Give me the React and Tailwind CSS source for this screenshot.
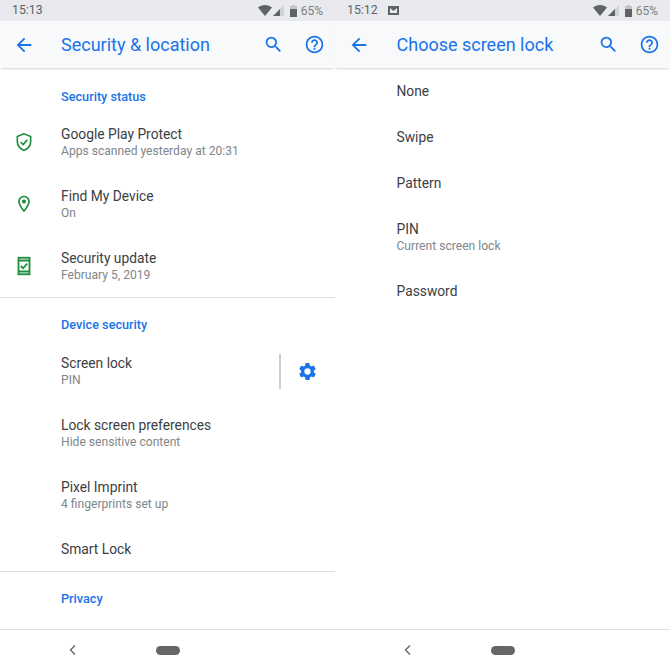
const BLUE = "#1a73e8";
const GREEN = "#1e8e3e";

function ArrowBack() {
  return (
    <svg width="22" height="22" viewBox="0 0 24 24" fill={BLUE}>
      <path d="M20 11H7.83l5.59-5.59L12 4l-8 8 8 8 1.41-1.41L7.83 13H20v-2z" />
    </svg>
  );
}

function SearchIcon() {
  return (
    <svg width="21" height="21" viewBox="0 0 24 24" fill={BLUE}>
      <path d="M15.5 14h-.79l-.28-.27A6.47 6.47 0 0 0 16 9.5 6.5 6.5 0 1 0 9.5 16c1.61 0 3.09-.59 4.23-1.57l.27.28v.79l5 4.99L20.49 19l-4.99-5zm-6 0C7.01 14 5 11.99 5 9.5S7.01 5 9.5 5 14 7.01 14 9.5 11.99 14 9.5 14z" />
    </svg>
  );
}

function HelpIcon() {
  return (
    <svg width="21" height="21" viewBox="0 0 24 24" fill={BLUE}>
      <path d="M11 18h2v-2h-2v2zm1-16C6.48 2 2 6.48 2 12s4.48 10 10 10 10-4.48 10-10S17.52 2 12 2zm0 18c-4.41 0-8-3.59-8-8s3.59-8 8-8 8 3.59 8 8-3.59 8-8 8zm0-14c-2.21 0-4 1.79-4 4h2c0-1.1.9-2 2-2s2 .9 2 2c0 2-3 1.75-3 5h2c0-2.25 3-2.5 3-5 0-2.21-1.79-4-4-4z" />
    </svg>
  );
}

function ShieldIcon() {
  return (
    <svg width="20" height="20" viewBox="0 0 24 24" fill="none" stroke={GREEN} strokeWidth="2">
      <path d="M12 2.2 4 5.4v6c0 5 3.4 9.4 8 10.5 4.6-1.1 8-5.5 8-10.5v-6L12 2.2z" />
      <path d="m8 12 3 3 5-5.5" />
    </svg>
  );
}

function PinIcon() {
  return (
    <svg width="20" height="20" viewBox="0 0 24 24" fill={GREEN}>
      <path d="M12 2C8.13 2 5 5.13 5 9c0 5.25 7 13 7 13s7-7.75 7-13c0-3.87-3.13-7-7-7zm0 17c-2.2-2.9-5-7.1-5-10a5 5 0 0 1 10 0c0 2.9-2.8 7.1-5 10z" />
      <circle cx="12" cy="9" r="2.5" />
    </svg>
  );
}

function PhoneCheckIcon() {
  return (
    <svg width="22" height="22" viewBox="0 0 24 24" fill="none" stroke={GREEN} strokeWidth="2">
      <rect x="6" y="3" width="12" height="18" />
      <path d="M6 6h12M6 18h12" />
      <path d="m8.5 12 2.5 2.5 4.5-5" />
    </svg>
  );
}

function GearIcon() {
  return (
    <svg width="21" height="21" viewBox="0 0 24 24" fill={BLUE}>
      <path d="M19.14 12.94c.04-.3.06-.61.06-.94 0-.32-.02-.64-.07-.94l2.03-1.58a.49.49 0 0 0 .12-.61l-1.92-3.32a.488.488 0 0 0-.59-.22l-2.39.96c-.5-.38-1.03-.7-1.62-.94l-.36-2.54a.484.484 0 0 0-.48-.41h-3.84c-.24 0-.43.17-.47.41l-.36 2.54c-.59.24-1.13.57-1.62.94l-2.39-.96c-.22-.08-.47 0-.59.22L2.74 8.87c-.12.21-.08.47.12.61l2.03 1.58c-.05.3-.09.63-.09.94s.02.64.07.94l-2.03 1.58a.49.49 0 0 0-.12.61l1.92 3.32c.12.22.37.29.59.22l2.39-.96c.5.38 1.03.7 1.62.94l.36 2.54c.05.24.24.41.48.41h3.84c.24 0 .44-.17.47-.41l.36-2.54c.59-.24 1.13-.56 1.62-.94l2.39.96c.22.08.47 0 .59-.22l1.92-3.32c.12-.22.07-.47-.12-.61l-2.01-1.58zM12 15.6A3.6 3.6 0 1 1 12 8.4a3.6 3.6 0 0 1 0 7.2z" />
    </svg>
  );
}

function StatusIcons() {
  return (
    <div className="flex items-center">
      <svg width="14" height="11" viewBox="0 0 14 11" fill="#5f6368">
        <path d="M0 2.5C1.9.9 4.3 0 7 0s5.1.9 7 2.5L7 11 0 2.5z" />
      </svg>
      <svg className="ml-[1px]" width="11" height="11" viewBox="0 0 11 11">
        <path d="M11 0v11H0L11 0z" fill="#d0d2d5" />
        <path d="M7 4v7H0l7-7z" fill="#5f6368" />
      </svg>
      <svg className="ml-[6px]" width="7" height="12" viewBox="0 0 7 12">
        <path d="M2 0h3v1h2v11H0V1h2V0z" fill="#c4c6c9" />
        <path d="M0 4h7v8H0z" fill="#5f6368" />
      </svg>
      <span className="ml-[4px] text-[12px] leading-none text-[#7b7f84]">65%</span>
    </div>
  );
}

function StatusBar({ time, mail }) {
  return (
    <div className="flex h-[21px] items-center justify-between bg-[#e8eaed] pl-[12px] pr-[12px]">
      <div className="flex items-center">
        <span className="text-[12.3px] leading-none text-[#5f6368]">{time}</span>
        {mail && (
          <svg className="ml-[10px]" width="11" height="9" viewBox="0 0 11 9">
            <path d="M0 0h11v9H0z" fill="#5f6368" />
            <path d="M2 2v5h7V2L5.5 5 2 2z" fill="#e8eaed" />
          </svg>
        )}
      </div>
      <StatusIcons />
    </div>
  );
}

function Toolbar({ title, indent }) {
  return (
    <div className="relative z-10 flex h-[47px] items-center bg-[#f8f9fb] shadow-[0_2px_2px_-1px_rgba(60,64,67,0.22)]">
      <div className={`flex items-center pl-[13px] ${indent}`}>
        <ArrowBack />
      </div>
      <div className="flex-1 text-[18px] leading-6 text-[#1a73e8]">{title}</div>
      <div className="flex items-center gap-[20px] pr-[10px]">
        <SearchIcon />
        <HelpIcon />
      </div>
    </div>
  );
}

function NavBar() {
  return (
    <div className="relative flex h-[41px] items-center border-t border-[#e0e0e0] bg-white">
      <svg className="ml-[69px]" width="8" height="10" viewBox="0 0 8 10" fill="none" stroke="#5f6368" strokeWidth="1.3">
        <path d="M6 .5 1.5 5 6 9.5" />
      </svg>
      <div className="ml-[79px] h-[9px] w-[24px] rounded-full bg-[#666]" />
    </div>
  );
}

function Row({ icon, title, sub, h = "h-[62px]", indent = "w-[61px]", children }) {
  return (
    <div className={`flex items-center ${h}`}>
      <div className={`flex items-center justify-center pr-[13px] ${indent}`}>{icon}</div>
      <div className="flex-1">
        <div className="text-[13.8px] leading-[18px] text-[#3c4043]">{title}</div>
        {sub && <div className="text-[12.1px] leading-[16px] text-[#80868b]">{sub}</div>}
      </div>
      {children}
    </div>
  );
}

function SectionTitle({ pt, pb, children }) {
  return (
    <div className={`pl-[61px] text-[12.7px] font-medium leading-[18px] text-[#1a73e8] ${pt} ${pb}`}>
      {children}
    </div>
  );
}

function SecurityScreen() {
  return (
    <div className="flex h-[670px] w-[335px] flex-col bg-white">
      <StatusBar time="15:13" />
      <Toolbar title="Security & location" indent="w-[61px]" />
      <div className="flex-1 overflow-hidden">
        <SectionTitle pt="pt-[20px]" pb="pb-[5px]">Security status</SectionTitle>
        <Row icon={<ShieldIcon />} title="Google Play Protect" sub="Apps scanned yesterday at 20:31" />
        <Row icon={<PinIcon />} title="Find My Device" sub="On" />
        <Row icon={<PhoneCheckIcon />} title="Security update" sub="February 5, 2019" />
        <div className="h-px bg-[#e0e0e0]" />
        <SectionTitle pt="pt-[18px]" pb="pb-[6px]">Device security</SectionTitle>
        <Row title="Screen lock" sub="PIN">
          <div className="h-[35px] w-[2px] bg-[#cfcfcf]" />
          <div className="flex w-[54px] items-center justify-center pr-[2px]">
            <GearIcon />
          </div>
        </Row>
        <Row title="Lock screen preferences" sub="Hide sensitive content" />
        <Row title="Pixel Imprint" sub="4 fingerprints set up" />
        <Row title="Smart Lock" h="h-[45px]" />
        <div className="h-px bg-[#e0e0e0]" />
        <SectionTitle pt="pt-[18px]" pb="pb-[6px]">Privacy</SectionTitle>
      </div>
      <NavBar />
    </div>
  );
}

function LockScreen() {
  return (
    <div className="flex h-[670px] w-[335px] flex-col bg-white">
      <StatusBar time="15:12" mail />
      <Toolbar title="Choose screen lock" indent="w-[61.5px]" />
      <div className="flex-1 overflow-hidden">
        <Row title="None" h="h-[46px]" indent="w-[61.5px]" />
        <Row title="Swipe" h="h-[46px]" indent="w-[61.5px]" />
        <Row title="Pattern" h="h-[46px]" indent="w-[61.5px]" />
        <Row title="PIN" sub="Current screen lock" indent="w-[61.5px]" />
        <Row title="Password" h="h-[46px]" indent="w-[61.5px]" />
      </div>
      <NavBar />
    </div>
  );
}

export default function App() {
  return (
    <div className="flex h-[670px] w-[670px] overflow-hidden bg-white font-[Roboto,sans-serif]">
      <SecurityScreen />
      <LockScreen />
    </div>
  );
}
